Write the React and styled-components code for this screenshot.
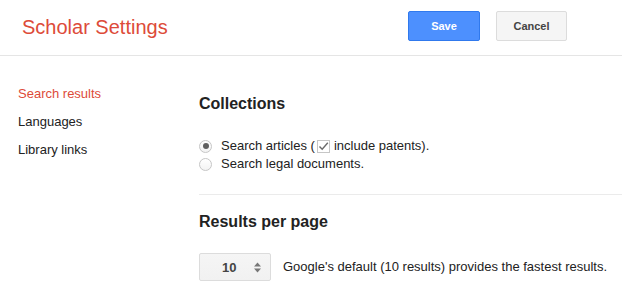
import React from 'react';
import styled, { createGlobalStyle } from 'styled-components';

const GlobalStyle = createGlobalStyle`
  body {
    margin: 0;
    background: #fff;
    color: #222;
    font-family: "Liberation Sans", Arial, sans-serif;
    font-size: 13px;
  }
`;

const Header = styled.header`
  display: flex;
  align-items: center;
  padding: 10px 55px 13px 22px;
  border-bottom: 1px solid #e5e5e5;
`;

const Title = styled.h1`
  flex: 1;
  margin: 0;
  padding-top: 2px;
  font-size: 20px;
  font-weight: normal;
  line-height: 30px;
  color: #dd4b39;
`;

const Button = styled.button`
  height: 30px;
  width: ${p => p.$width}px;
  margin-left: ${p => p.$gap || 0}px;
  padding: 0;
  border-radius: 2px;
  font-family: inherit;
  font-size: 11px;
  font-weight: bold;
  cursor: pointer;
  border: 1px solid ${p => (p.$primary ? '#3079ed' : '#dcdcdc')};
  background: ${p => (p.$primary ? '#4d90fe' : '#f5f5f5')};
  color: ${p => (p.$primary ? '#fff' : '#444')};
`;

const Body = styled.div`
  display: flex;
`;

const Sidebar = styled.nav`
  width: 181px;
  padding: 24px 0 0 18px;
  display: flex;
  flex-direction: column;
`;

const NavLink = styled.a`
  line-height: 28px;
  font-size: 13px;
  color: ${p => (p.$active ? '#dd4b39' : '#222')};
  text-decoration: none;
  cursor: pointer;
`;

const Main = styled.main`
  flex: 1;
  padding-top: 38px;
`;

const Section = styled.section`
  padding-bottom: ${p => p.$pad || 0}px;
  border-bottom: ${p => (p.$divider ? '1px solid #ebebeb' : 'none')};
  margin-bottom: ${p => (p.$divider ? 17 : 0)}px;
`;

const Heading = styled.h2`
  margin: 0;
  font-size: 16px;
  line-height: 20px;
  font-weight: bold;
  color: #222;
`;

const Options = styled.div`
  margin-top: 23px;
  display: flex;
  flex-direction: column;
`;

const OptionRow = styled.label`
  display: flex;
  align-items: center;
  line-height: 18px;
  cursor: pointer;
`;

const Radio = styled.span`
  box-sizing: border-box;
  width: 13px;
  height: 13px;
  margin-right: 9px;
  border-radius: 50%;
  border: 1px solid #c6c6c6;
  background: linear-gradient(#fff, #f3f3f3);
  display: flex;
  align-items: center;
  justify-content: center;

  &::after {
    content: '';
    display: ${p => (p.$checked ? 'block' : 'none')};
    width: 6px;
    height: 6px;
    border-radius: 50%;
    background: #606060;
  }
`;

const CheckBox = styled.span`
  box-sizing: border-box;
  display: inline-flex;
  align-items: center;
  justify-content: center;
  width: 13px;
  height: 13px;
  margin: 0 4px 0 2px;
  border: 1px solid #c6c6c6;
  background: #fff;
`;

const SelectRow = styled.div`
  margin-top: 21px;
  display: flex;
  align-items: center;
`;

const Select = styled.div`
  box-sizing: border-box;
  width: 72px;
  height: 28px;
  padding: 0 9px 0 22px;
  display: flex;
  align-items: center;
  justify-content: space-between;
  border: 1px solid #dcdcdc;
  border-radius: 2px;
  background: linear-gradient(#f5f5f5, #f1f1f1);
  font-weight: bold;
  color: #444;
`;

const Hint = styled.span`
  margin-left: 12px;
  line-height: 28px;
`;

const Check = () => (
  <svg width="11" height="11" viewBox="0 0 11 11">
    <path d="M1.5 5.5 L4.2 8.3 L9.8 1.8" fill="none" stroke="#6a6a6a" strokeWidth="1.4" />
  </svg>
);

const Arrows = () => (
  <svg width="7" height="11" viewBox="0 0 7 11">
    <path d="M0 4.5 L3.5 0.5 L7 4.5 Z M0 6.5 L3.5 10.5 L7 6.5 Z" fill="#777" />
  </svg>
);

export default function App() {
  return (
    <>
      <GlobalStyle />
      <Header>
        <Title>Scholar Settings</Title>
        <Button $primary $width={72}>Save</Button>
        <Button $width={71} $gap={16}>Cancel</Button>
      </Header>
      <Body>
        <Sidebar>
          <NavLink $active>Search results</NavLink>
          <NavLink>Languages</NavLink>
          <NavLink>Library links</NavLink>
        </Sidebar>
        <Main>
          <Section $divider $pad={21}>
            <Heading>Collections</Heading>
            <Options>
              <OptionRow>
                <Radio $checked />
                Search articles (<CheckBox><Check /></CheckBox>include patents).
              </OptionRow>
              <OptionRow>
                <Radio />
                Search legal documents.
              </OptionRow>
            </Options>
          </Section>
          <Section>
            <Heading>Results per page</Heading>
            <SelectRow>
              <Select>
                <span>10</span>
                <Arrows />
              </Select>
              <Hint>Google's default (10 results) provides the fastest results.</Hint>
            </SelectRow>
          </Section>
        </Main>
      </Body>
    </>
  );
}
